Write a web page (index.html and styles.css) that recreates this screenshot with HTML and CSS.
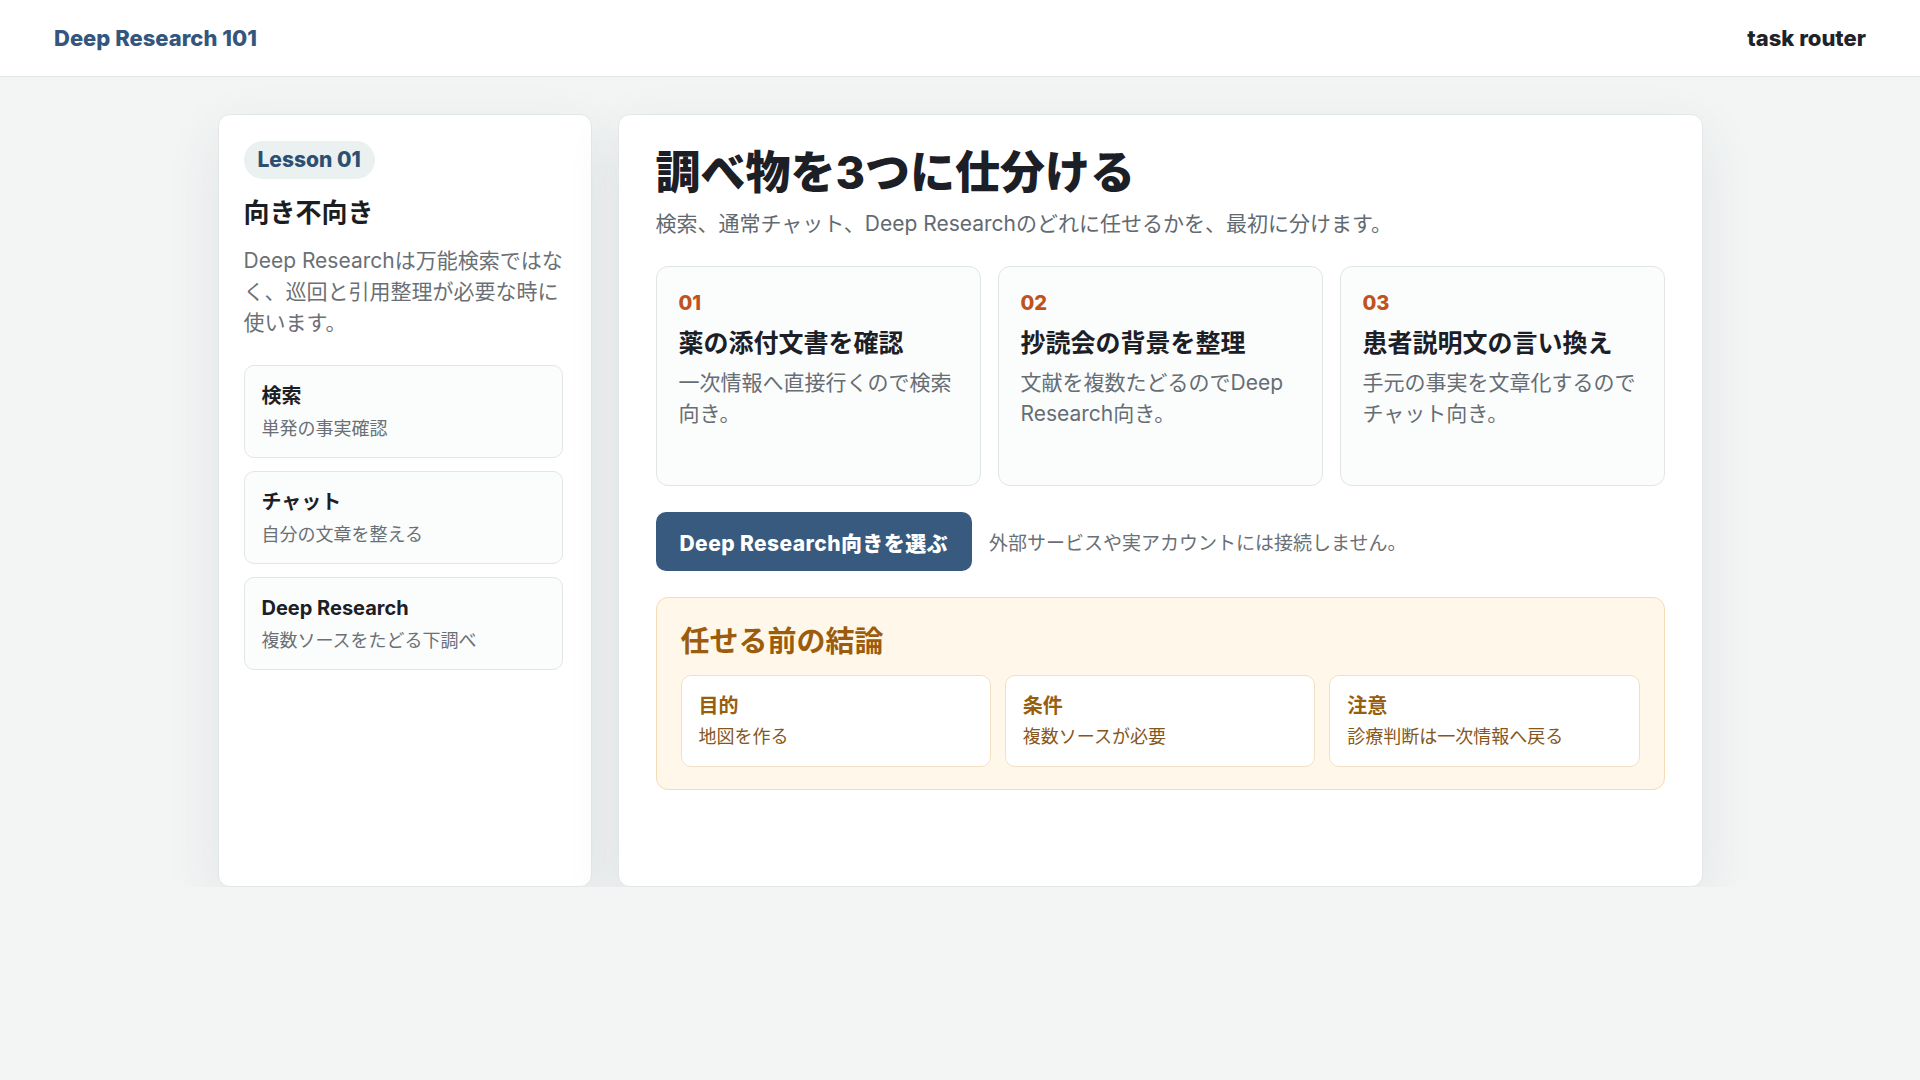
FILE: index.html
```html
<!DOCTYPE html>
<html lang="ja">

<head>
    <meta charset="UTF-8">
    <meta name="viewport" content="width=device-width, initial-scale=1.0">
    <title>Deep Research 101 - task router</title>
    <link rel="stylesheet" href="styles.css">
</head>

<body>
    <header class="topbar">
        <div class="brand">Deep Research 101</div>
        <div class="topbar-tag">task router</div>
    </header>

    <main class="layout">
        <aside class="side-card">
            <span class="lesson-pill">Lesson 01</span>
            <h2>向き不向き</h2>
            <p class="side-desc">Deep Researchは万能検索ではなく、巡回と引用整理が必要な時に使います。</p>

            <div class="mode-list">
                <div class="mode-item">
                    <strong>検索</strong>
                    <span>単発の事実確認</span>
                </div>
                <div class="mode-item">
                    <strong>チャット</strong>
                    <span>自分の文章を整える</span>
                </div>
                <div class="mode-item">
                    <strong>Deep Research</strong>
                    <span>複数ソースをたどる下調べ</span>
                </div>
            </div>
        </aside>

        <section class="main-card">
            <h1>調べ物を3つに仕分ける</h1>
            <p class="lead">検索、通常チャット、Deep Researchのどれに任せるかを、最初に分けます。</p>

            <div class="steps">
                <div class="step">
                    <div class="step-num">01</div>
                    <h3>薬の添付文書を確認</h3>
                    <p>一次情報へ直接行くので検索向き。</p>
                </div>
                <div class="step">
                    <div class="step-num">02</div>
                    <h3>抄読会の背景を整理</h3>
                    <p>文献を複数たどるのでDeep Research向き。</p>
                </div>
                <div class="step">
                    <div class="step-num">03</div>
                    <h3>患者説明文の言い換え</h3>
                    <p>手元の事実を文章化するのでチャット向き。</p>
                </div>
            </div>

            <div class="action-row">
                <button class="pick-button">Deep Research向きを選ぶ</button>
                <span class="action-note">外部サービスや実アカウントには接続しません。</span>
            </div>

            <div class="conclusion">
                <h3>任せる前の結論</h3>
                <div class="conclusion-grid">
                    <div class="conclusion-item">
                        <strong>目的</strong>
                        <span>地図を作る</span>
                    </div>
                    <div class="conclusion-item">
                        <strong>条件</strong>
                        <span>複数ソースが必要</span>
                    </div>
                    <div class="conclusion-item">
                        <strong>注意</strong>
                        <span>診療判断は一次情報へ戻る</span>
                    </div>
                </div>
            </div>
        </section>
    </main>
</body>

</html>
```

FILE: styles.css
```css
body {
    font-family: "Inter", "Noto Sans CJK JP", sans-serif;
    margin: 0;
    padding: 0;
    background-color: #f3f5f5;
    color: #1c2026;
}

.topbar {
    height: 76px;
    display: flex;
    align-items: center;
    justify-content: space-between;
    padding: 0 54px;
    background-color: #fff;
    border-bottom: 1px solid #e1e5e6;
}

.brand {
    color: #34567c;
    font-size: 22px;
    font-weight: 800;
}

.topbar-tag {
    color: #1f2328;
    font-size: 22px;
    font-weight: 800;
}

.layout {
    width: 1485px;
    margin: 37px auto 0;
    display: grid;
    grid-template-columns: 374px 1fr;
    gap: 26px;
}

.side-card,
.main-card {
    background-color: #fff;
    border: 1px solid #e3e7e8;
    border-radius: 12px;
    box-shadow: 0 18px 56px rgba(40, 60, 70, 0.09);
    min-height: 773px;
    box-sizing: border-box;
}

.side-card {
    padding: 26px 28px 26px 25px;
}

.lesson-pill {
    display: inline-block;
    background-color: #eaf1f0;
    color: #2f4f72;
    font-size: 21px;
    font-weight: 800;
    line-height: 38px;
    padding: 0 14px;
    border-radius: 19px;
}

.side-card h2 {
    font-size: 26px;
    line-height: 36px;
    margin: 16px 0 0;
    color: #1a1d22;
}

.side-desc {
    font-size: 21px;
    line-height: 31px;
    color: #6a7076;
    margin: 14px -5px 0 0;
}

.mode-list {
    display: flex;
    flex-direction: column;
    gap: 13px;
    margin-top: 27px;
}

.mode-item {
    display: flex;
    flex-direction: column;
    gap: 6px;
    padding: 16px 17px 15px;
    background-color: #fbfcfc;
    border: 1px solid #e2e6e8;
    border-radius: 10px;
}

.mode-item strong {
    font-size: 20px;
    line-height: 28px;
    color: #1c2026;
}

.mode-item span {
    font-size: 18px;
    line-height: 26px;
    color: #6a7076;
}

.main-card {
    padding: 31px 37px;
}

.main-card h1 {
    font-size: 45px;
    line-height: 54px;
    font-weight: 800;
    margin: 0;
    color: #1c2026;
}

.lead {
    font-size: 21px;
    line-height: 31px;
    color: #626a71;
    margin: 8px 0 0;
}

.steps {
    display: grid;
    grid-template-columns: repeat(3, 1fr);
    gap: 17px;
    margin-top: 27px;
}

.step {
    min-height: 220px;
    box-sizing: border-box;
    padding: 23px 22px 22px;
    background-color: #fbfcfc;
    border: 1px solid #e1e5e8;
    border-radius: 12px;
}

.step-num {
    color: #c0531d;
    font-size: 20px;
    font-weight: 800;
    line-height: 26px;
}

.step h3 {
    font-size: 25px;
    line-height: 35px;
    margin: 10px 0 0;
    color: #1c2026;
}

.step p {
    font-size: 21px;
    line-height: 31px;
    color: #666d73;
    margin: 6px 0 0;
}

.action-row {
    display: flex;
    align-items: center;
    gap: 17px;
    margin-top: 26px;
}

.pick-button {
    height: 59px;
    padding: 0 24px;
    background-color: #375a7e;
    color: #fff;
    font-family: inherit;
    font-size: 21px;
    font-weight: 800;
    letter-spacing: 0.02em;
    border: none;
    border-radius: 10px;
    cursor: pointer;
}

.pick-button:hover {
    background-color: #2d4c6c;
}

.action-note {
    font-size: 19px;
    color: #6a7076;
}

.conclusion {
    margin-top: 26px;
    padding: 24px 24px 22px;
    background-color: #fff7e9;
    border: 1px solid #f3dcb6;
    border-radius: 12px;
}

.conclusion h3 {
    font-size: 29px;
    line-height: 40px;
    margin: 0;
    color: #9b5d0d;
}

.conclusion-grid {
    display: grid;
    grid-template-columns: repeat(3, 1fr);
    gap: 14px;
    margin-top: 13px;
}

.conclusion-item {
    display: flex;
    flex-direction: column;
    gap: 4px;
    padding: 16px 17px 16px;
    background-color: #fff;
    border: 1px solid #f1e1c4;
    border-radius: 10px;
}

.conclusion-item strong {
    font-size: 20px;
    line-height: 28px;
    color: #965e0e;
}

.conclusion-item span {
    font-size: 18px;
    line-height: 26px;
    color: #86561a;
}
```
